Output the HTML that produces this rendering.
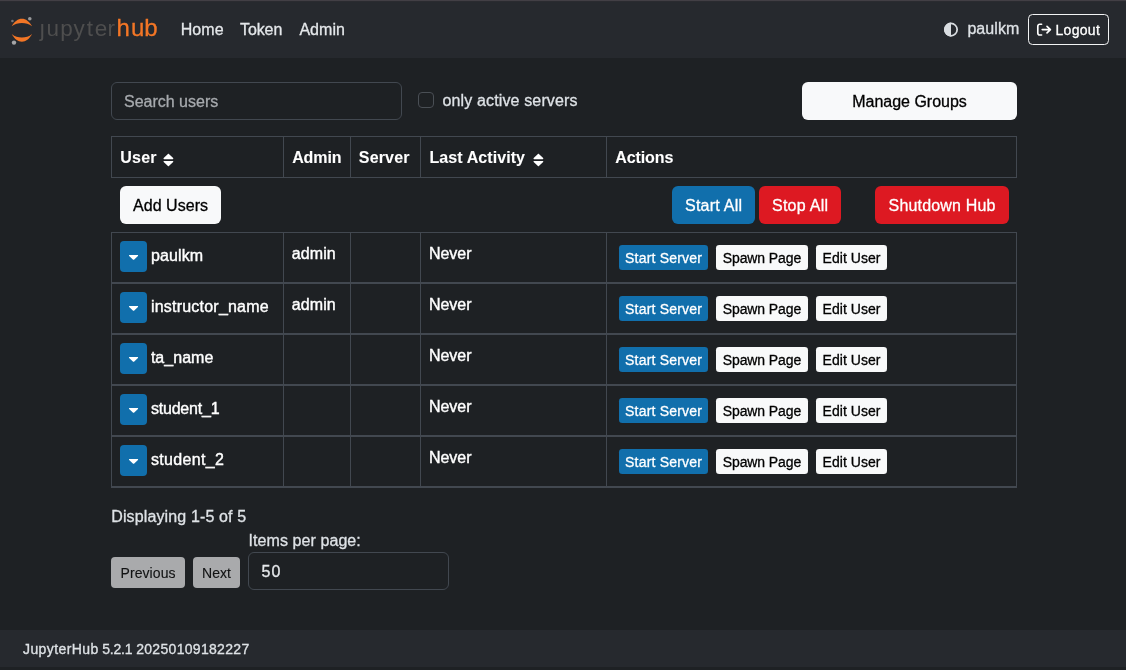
<!DOCTYPE html>
<html lang="en">
<head>
<meta charset="utf-8">
<title>JupyterHub</title>
<style>
html,body{margin:0;padding:0;}
body{width:1126px;height:670px;overflow:hidden;position:relative;background:#1e2124;font-family:"Liberation Sans",sans-serif;color:#dee2e6;}
.t{position:absolute;white-space:nowrap;display:block;-webkit-text-stroke:0.3px currentColor;}
.w{-webkit-text-stroke:0.4px currentColor;}
.d{-webkit-text-stroke:0.12px currentColor;}
.n{-webkit-text-stroke:0;}
.h{-webkit-text-stroke:0.08px currentColor;}
.b{position:absolute;box-sizing:border-box;}
.bar{position:absolute;left:0;width:1126px;background:#26292e;}
svg{position:absolute;overflow:visible;}
</style>
</head>
<body>
<div id="app" style="position:absolute;left:0;top:0;width:1126px;height:670px;will-change:transform;">
<div class="bar" style="top:0;height:58px;"></div>
<div class="b" style="left:0;top:0;width:1126px;height:1px;background:#423f45;"></div>
<div class="b" style="left:0;top:1px;width:1126px;height:1px;background:#2a2b30;"></div>
<svg style="left:0;top:0" width="180" height="58" viewBox="0 0 180 58">
<path d="M11.7 26.3 C14.5 21.2 18 18.7 21.9 18.7 C25.8 18.7 29.3 21.2 32.1 26.3 C29 23.7 25.6 22.9 21.9 22.9 C18.2 22.9 14.8 23.7 11.7 26.3 Z" fill="#f37626"/>
<path d="M11.7 34 C14.5 39.1 18 41.7 21.9 41.7 C25.8 41.7 29.3 39.1 32.1 34 C29 36.6 25.6 37.4 21.9 37.4 C18.2 37.4 14.8 36.6 11.7 34 Z" fill="#f37626"/>
<circle cx="12.4" cy="21" r="1.3" fill="#77777a"/>
<circle cx="29.8" cy="18.8" r="1.8" fill="#98989a"/>
<circle cx="14" cy="42.6" r="2.2" fill="#a5a5a7"/>
</svg>
<span class="t n" style="left:39.75px;top:12px;font-size:22.5px;line-height:33px;color:#4e4e4e;">ȷ</span>
<span class="t n" style="left:46.54px;top:12px;font-size:22.5px;line-height:33px;color:#4e4e4e;">u</span>
<span class="t n" style="left:60.15px;top:12px;font-size:22.5px;line-height:33px;color:#4e4e4e;">p</span>
<span class="t n" style="left:73.55px;top:12px;font-size:22.5px;line-height:33px;color:#4e4e4e;">y</span>
<span class="t n" style="left:86.86px;top:12px;font-size:22.5px;line-height:33px;color:#4e4e4e;">t</span>
<span class="t n" style="left:94.64px;top:12px;font-size:22.5px;line-height:33px;color:#4e4e4e;">e</span>
<span class="t n" style="left:107.60px;top:12px;font-size:22.5px;line-height:33px;color:#4e4e4e;">r</span>
<span class="t " style="left:116.50px;top:10px;font-size:24px;line-height:35px;color:#f37626;">h</span>
<span class="t " style="left:130.90px;top:10px;font-size:24px;line-height:35px;color:#f37626;">u</span>
<span class="t " style="left:144.30px;top:10px;font-size:24px;line-height:35px;color:#f37626;">b</span>
<span class="t " style="left:180.70px;top:17px;font-size:16px;line-height:25px;color:#e4e7ea;letter-spacing:0.073px;">Home</span>
<span class="t " style="left:240.00px;top:17px;font-size:16px;line-height:25px;color:#e4e7ea;letter-spacing:-0.099px;">Token</span>
<span class="t " style="left:299.40px;top:17px;font-size:16px;line-height:25px;color:#e4e7ea;letter-spacing:0.037px;">Admin</span>
<svg style="left:943px;top:22.2px" width="16" height="16" viewBox="0 0 16 16">
<circle cx="8" cy="7.6" r="6.15" fill="none" stroke="#d9dde1" stroke-width="1.75"/>
<path d="M8 0.6 A7 7 0 0 0 8 14.6 Z" fill="#d9dde1"/>
</svg>
<span class="t " style="left:967.40px;top:16px;font-size:16px;line-height:25px;color:#dee2e6;letter-spacing:0.084px;">paulkm</span>
<div class="b" style="left:1028px;top:14px;width:81px;height:31px;border:1px solid #f2f3f4;border-radius:4.5px;"></div>
<svg style="left:1036px;top:22px" width="16" height="16" viewBox="0 0 16 16" fill="none" stroke="#fff" stroke-width="1.65" stroke-linecap="round" stroke-linejoin="round">
<path d="M5.6 2.2 H3.8 C2.6 2.2 1.8 3 1.8 4.2 V11 C1.8 12.2 2.6 13 3.8 13 H5.6"/>
<path d="M6.2 7.6 H14.2 M11 4.3 L14.4 7.6 L11 10.9"/>
</svg>
<span class="t " style="left:1055.50px;top:18px;font-size:14px;line-height:24px;color:#fff;letter-spacing:0.296px;">Logout</span>
<div class="b" style="left:111px;top:82px;width:291px;height:38px;border:1px solid #424850;border-radius:6px;"></div>
<span class="t " style="left:124.00px;top:89px;font-size:16px;line-height:25px;color:#a7aaae;letter-spacing:-0.006px;">Search users</span>
<div class="b" style="left:418px;top:92px;width:16px;height:16px;border:1px solid #4a4f55;border-radius:4px;"></div>
<span class="t " style="left:442.50px;top:88px;font-size:16px;line-height:25px;color:#dee2e6;letter-spacing:0.139px;">only active servers</span>
<div class="b" style="left:802px;top:82px;width:215px;height:38px;background:#f8f9fa;border-radius:6px;"></div>
<span class="t " style="left:852.20px;top:89px;font-size:16px;line-height:25px;color:#000;letter-spacing:-0.011px;">Manage Groups</span>
<div class="b" style="left:111px;top:136px;width:906px;height:1px;background:#424850;"></div>
<div class="b" style="left:111px;top:177px;width:906px;height:1px;background:#424850;"></div>
<div class="b" style="left:111px;top:136px;width:1px;height:42px;background:#424850;"></div>
<div class="b" style="left:283px;top:136px;width:1px;height:42px;background:#424850;"></div>
<div class="b" style="left:350px;top:136px;width:1px;height:42px;background:#424850;"></div>
<div class="b" style="left:420px;top:136px;width:1px;height:42px;background:#424850;"></div>
<div class="b" style="left:606px;top:136px;width:1px;height:42px;background:#424850;"></div>
<div class="b" style="left:1016px;top:136px;width:1px;height:42px;background:#424850;"></div>
<div class="b" style="left:111px;top:232px;width:906px;height:1px;background:#424850;"></div>
<div class="b" style="left:111px;top:282px;width:906px;height:2px;background:#424850;"></div>
<div class="b" style="left:111px;top:333px;width:906px;height:2px;background:#424850;"></div>
<div class="b" style="left:111px;top:384px;width:906px;height:2px;background:#424850;"></div>
<div class="b" style="left:111px;top:435px;width:906px;height:2px;background:#424850;"></div>
<div class="b" style="left:111px;top:486px;width:906px;height:2px;background:#424850;"></div>
<div class="b" style="left:111px;top:232px;width:1px;height:256px;background:#424850;"></div>
<div class="b" style="left:283px;top:232px;width:1px;height:256px;background:#424850;"></div>
<div class="b" style="left:350px;top:232px;width:1px;height:256px;background:#424850;"></div>
<div class="b" style="left:420px;top:232px;width:1px;height:256px;background:#424850;"></div>
<div class="b" style="left:606px;top:232px;width:1px;height:256px;background:#424850;"></div>
<div class="b" style="left:1016px;top:232px;width:1px;height:256px;background:#424850;"></div>
<span class="t h" style="left:120.30px;top:145px;font-size:16px;line-height:25px;color:#fff;font-weight:700;letter-spacing:0.240px;">User</span>
<span class="t h" style="left:292.20px;top:145px;font-size:16px;line-height:25px;color:#fff;font-weight:700;letter-spacing:-0.118px;">Admin</span>
<span class="t h" style="left:358.80px;top:145px;font-size:16px;line-height:25px;color:#fff;font-weight:700;letter-spacing:0.176px;">Server</span>
<span class="t h" style="left:429.50px;top:145px;font-size:16px;line-height:25px;color:#fff;font-weight:700;letter-spacing:0.079px;">Last Activity</span>
<span class="t h" style="left:615.20px;top:145px;font-size:16px;line-height:25px;color:#fff;font-weight:700;letter-spacing:-0.079px;">Actions</span>
<svg style="left:162.6px;top:153px" width="11.6" height="14" viewBox="0 0 12 14" preserveAspectRatio="none"><path d="M1.2 6.2 H10 C10.6 6.2 10.9 5.5 10.5 5.1 L6.1 1 C5.8 0.7 5.4 0.7 5.1 1 L0.7 5.1 C0.3 5.5 0.6 6.2 1.2 6.2 Z M1.2 7.9 H10 C10.6 7.9 10.9 8.6 10.5 9 L6.1 13.1 C5.8 13.4 5.4 13.4 5.1 13.1 L0.7 9 C0.3 8.6 0.6 7.9 1.2 7.9 Z" fill="#fff"/></svg>
<svg style="left:532.6px;top:153px" width="11.6" height="14" viewBox="0 0 12 14" preserveAspectRatio="none"><path d="M1.2 6.2 H10 C10.6 6.2 10.9 5.5 10.5 5.1 L6.1 1 C5.8 0.7 5.4 0.7 5.1 1 L0.7 5.1 C0.3 5.5 0.6 6.2 1.2 6.2 Z M1.2 7.9 H10 C10.6 7.9 10.9 8.6 10.5 9 L6.1 13.1 C5.8 13.4 5.4 13.4 5.1 13.1 L0.7 9 C0.3 8.6 0.6 7.9 1.2 7.9 Z" fill="#fff"/></svg>
<div class="b" style="left:120px;top:186px;width:101px;height:38px;background:#f8f9fa;border-radius:6px;"></div>
<span class="t " style="left:133.00px;top:193px;font-size:16px;line-height:25px;color:#000;letter-spacing:0.038px;">Add Users</span>
<div class="b" style="left:672px;top:186px;width:83px;height:38px;background:#116fac;border-radius:6px;"></div>
<span class="t " style="left:685.00px;top:193px;font-size:16px;line-height:25px;color:#fff;letter-spacing:0.233px;">Start All</span>
<div class="b" style="left:759px;top:186px;width:82px;height:38px;background:#dd1922;border-radius:6px;"></div>
<span class="t " style="left:772.00px;top:193px;font-size:16px;line-height:25px;color:#fff;letter-spacing:0.249px;">Stop All</span>
<div class="b" style="left:875px;top:186px;width:134px;height:38px;background:#dd1922;border-radius:6px;"></div>
<span class="t " style="left:888.60px;top:193px;font-size:16px;line-height:25px;color:#fff;letter-spacing:0.167px;">Shutdown Hub</span>
<div class="b" style="left:120px;top:241px;width:27px;height:31px;background:#116fac;border-radius:4px;"></div>
<svg style="left:127.9px;top:254.3px" width="11.1" height="7.2" viewBox="0 0 12 8"><path d="M1.6 1 H10.4 C11 1 11.3 1.7 10.9 2.1 L6.5 6.3 C6.2 6.6 5.8 6.6 5.5 6.3 L1.1 2.1 C0.7 1.7 1 1 1.6 1 Z" fill="#fff"/></svg>
<span class="t w" style="left:150.90px;top:243px;font-size:16px;line-height:25px;color:#fff;letter-spacing:0.144px;">paulkm</span>
<span class="t w" style="left:291.70px;top:241px;font-size:16px;line-height:25px;color:#fff;letter-spacing:0.105px;">admin</span>
<span class="t w" style="left:429.00px;top:241px;font-size:16px;line-height:25px;color:#fff;letter-spacing:-0.045px;">Never</span>
<div class="b" style="left:619px;top:245px;width:89px;height:25px;background:#116fac;border-radius:3.3px;"></div>
<span class="t " style="left:625.10px;top:246px;font-size:14px;line-height:24px;color:#fff;letter-spacing:0.192px;">Start Server</span>
<div class="b" style="left:716px;top:245px;width:92px;height:25px;background:#f8f9fa;border-radius:3.3px;"></div>
<span class="t " style="left:722.70px;top:246px;font-size:14px;line-height:24px;color:#000;letter-spacing:-0.088px;">Spawn Page</span>
<div class="b" style="left:816px;top:245px;width:71px;height:25px;background:#f8f9fa;border-radius:3.3px;"></div>
<span class="t " style="left:822.50px;top:246px;font-size:14px;line-height:24px;color:#000;letter-spacing:0.053px;">Edit User</span>
<div class="b" style="left:120px;top:292px;width:27px;height:31px;background:#116fac;border-radius:4px;"></div>
<svg style="left:127.9px;top:305.3px" width="11.1" height="7.2" viewBox="0 0 12 8"><path d="M1.6 1 H10.4 C11 1 11.3 1.7 10.9 2.1 L6.5 6.3 C6.2 6.6 5.8 6.6 5.5 6.3 L1.1 2.1 C0.7 1.7 1 1 1.6 1 Z" fill="#fff"/></svg>
<span class="t w" style="left:150.90px;top:294px;font-size:16px;line-height:25px;color:#fff;letter-spacing:0.220px;">instructor_name</span>
<span class="t w" style="left:291.70px;top:292px;font-size:16px;line-height:25px;color:#fff;letter-spacing:0.105px;">admin</span>
<span class="t w" style="left:429.00px;top:292px;font-size:16px;line-height:25px;color:#fff;letter-spacing:-0.045px;">Never</span>
<div class="b" style="left:619px;top:296px;width:89px;height:25px;background:#116fac;border-radius:3.3px;"></div>
<span class="t " style="left:625.10px;top:297px;font-size:14px;line-height:24px;color:#fff;letter-spacing:0.192px;">Start Server</span>
<div class="b" style="left:716px;top:296px;width:92px;height:25px;background:#f8f9fa;border-radius:3.3px;"></div>
<span class="t " style="left:722.70px;top:297px;font-size:14px;line-height:24px;color:#000;letter-spacing:-0.088px;">Spawn Page</span>
<div class="b" style="left:816px;top:296px;width:71px;height:25px;background:#f8f9fa;border-radius:3.3px;"></div>
<span class="t " style="left:822.50px;top:297px;font-size:14px;line-height:24px;color:#000;letter-spacing:0.053px;">Edit User</span>
<div class="b" style="left:120px;top:343px;width:27px;height:31px;background:#116fac;border-radius:4px;"></div>
<svg style="left:127.9px;top:356.3px" width="11.1" height="7.2" viewBox="0 0 12 8"><path d="M1.6 1 H10.4 C11 1 11.3 1.7 10.9 2.1 L6.5 6.3 C6.2 6.6 5.8 6.6 5.5 6.3 L1.1 2.1 C0.7 1.7 1 1 1.6 1 Z" fill="#fff"/></svg>
<span class="t w" style="left:150.90px;top:345px;font-size:16px;line-height:25px;color:#fff;letter-spacing:0.039px;">ta_name</span>
<span class="t w" style="left:429.00px;top:343px;font-size:16px;line-height:25px;color:#fff;letter-spacing:-0.045px;">Never</span>
<div class="b" style="left:619px;top:347px;width:89px;height:25px;background:#116fac;border-radius:3.3px;"></div>
<span class="t " style="left:625.10px;top:348px;font-size:14px;line-height:24px;color:#fff;letter-spacing:0.192px;">Start Server</span>
<div class="b" style="left:716px;top:347px;width:92px;height:25px;background:#f8f9fa;border-radius:3.3px;"></div>
<span class="t " style="left:722.70px;top:348px;font-size:14px;line-height:24px;color:#000;letter-spacing:-0.088px;">Spawn Page</span>
<div class="b" style="left:816px;top:347px;width:71px;height:25px;background:#f8f9fa;border-radius:3.3px;"></div>
<span class="t " style="left:822.50px;top:348px;font-size:14px;line-height:24px;color:#000;letter-spacing:0.053px;">Edit User</span>
<div class="b" style="left:120px;top:394px;width:27px;height:31px;background:#116fac;border-radius:4px;"></div>
<svg style="left:127.9px;top:407.3px" width="11.1" height="7.2" viewBox="0 0 12 8"><path d="M1.6 1 H10.4 C11 1 11.3 1.7 10.9 2.1 L6.5 6.3 C6.2 6.6 5.8 6.6 5.5 6.3 L1.1 2.1 C0.7 1.7 1 1 1.6 1 Z" fill="#fff"/></svg>
<span class="t w" style="left:150.90px;top:396px;font-size:16px;line-height:25px;color:#fff;letter-spacing:-0.198px;">student_1</span>
<span class="t w" style="left:429.00px;top:394px;font-size:16px;line-height:25px;color:#fff;letter-spacing:-0.045px;">Never</span>
<div class="b" style="left:619px;top:398px;width:89px;height:25px;background:#116fac;border-radius:3.3px;"></div>
<span class="t " style="left:625.10px;top:399px;font-size:14px;line-height:24px;color:#fff;letter-spacing:0.192px;">Start Server</span>
<div class="b" style="left:716px;top:398px;width:92px;height:25px;background:#f8f9fa;border-radius:3.3px;"></div>
<span class="t " style="left:722.70px;top:399px;font-size:14px;line-height:24px;color:#000;letter-spacing:-0.088px;">Spawn Page</span>
<div class="b" style="left:816px;top:398px;width:71px;height:25px;background:#f8f9fa;border-radius:3.3px;"></div>
<span class="t " style="left:822.50px;top:399px;font-size:14px;line-height:24px;color:#000;letter-spacing:0.053px;">Edit User</span>
<div class="b" style="left:120px;top:445px;width:27px;height:31px;background:#116fac;border-radius:4px;"></div>
<svg style="left:127.9px;top:458.3px" width="11.1" height="7.2" viewBox="0 0 12 8"><path d="M1.6 1 H10.4 C11 1 11.3 1.7 10.9 2.1 L6.5 6.3 C6.2 6.6 5.8 6.6 5.5 6.3 L1.1 2.1 C0.7 1.7 1 1 1.6 1 Z" fill="#fff"/></svg>
<span class="t w" style="left:150.90px;top:447px;font-size:16px;line-height:25px;color:#fff;letter-spacing:0.352px;">student_2</span>
<span class="t w" style="left:429.00px;top:445px;font-size:16px;line-height:25px;color:#fff;letter-spacing:-0.045px;">Never</span>
<div class="b" style="left:619px;top:449px;width:89px;height:25px;background:#116fac;border-radius:3.3px;"></div>
<span class="t " style="left:625.10px;top:450px;font-size:14px;line-height:24px;color:#fff;letter-spacing:0.192px;">Start Server</span>
<div class="b" style="left:716px;top:449px;width:92px;height:25px;background:#f8f9fa;border-radius:3.3px;"></div>
<span class="t " style="left:722.70px;top:450px;font-size:14px;line-height:24px;color:#000;letter-spacing:-0.088px;">Spawn Page</span>
<div class="b" style="left:816px;top:449px;width:71px;height:25px;background:#f8f9fa;border-radius:3.3px;"></div>
<span class="t " style="left:822.50px;top:450px;font-size:14px;line-height:24px;color:#000;letter-spacing:0.053px;">Edit User</span>
<span class="t " style="left:111.20px;top:504px;font-size:16px;line-height:25px;color:#dee2e6;letter-spacing:0.138px;">Displaying 1-5 of 5</span>
<span class="t " style="left:248.50px;top:528px;font-size:16px;line-height:25px;color:#dee2e6;letter-spacing:0.080px;">Items per page:</span>
<div class="b" style="left:111px;top:557px;width:74px;height:31px;background:#a9aaac;border-radius:4px;"></div>
<span class="t d" style="left:120.50px;top:561px;font-size:14px;line-height:24px;color:#121314;letter-spacing:0.076px;">Previous</span>
<div class="b" style="left:193px;top:557px;width:47px;height:31px;background:#a9aaac;border-radius:4px;"></div>
<span class="t d" style="left:202.00px;top:561px;font-size:14px;line-height:24px;color:#121314;letter-spacing:0.071px;">Next</span>
<div class="b" style="left:248px;top:552px;width:201px;height:38px;border:1px solid #424850;border-radius:6px;"></div>
<span class="t " style="left:261.50px;top:559px;font-size:16px;line-height:25px;color:#e6e9ec;letter-spacing:1.003px;">50</span>
<div class="bar" style="top:630px;height:37px;"></div>
<span class="t " style="left:23.00px;top:637px;font-size:14px;line-height:24px;color:#dee2e6;letter-spacing:0.401px;">JupyterHub</span>
<span class="t " style="left:102.20px;top:637px;font-size:14px;line-height:24px;color:#dee2e6;letter-spacing:-0.209px;">5.2.1</span>
<span class="t " style="left:136.20px;top:637px;font-size:14px;line-height:24px;color:#dee2e6;letter-spacing:0.307px;">20250109182227</span>
</div>
</body>
</html>
